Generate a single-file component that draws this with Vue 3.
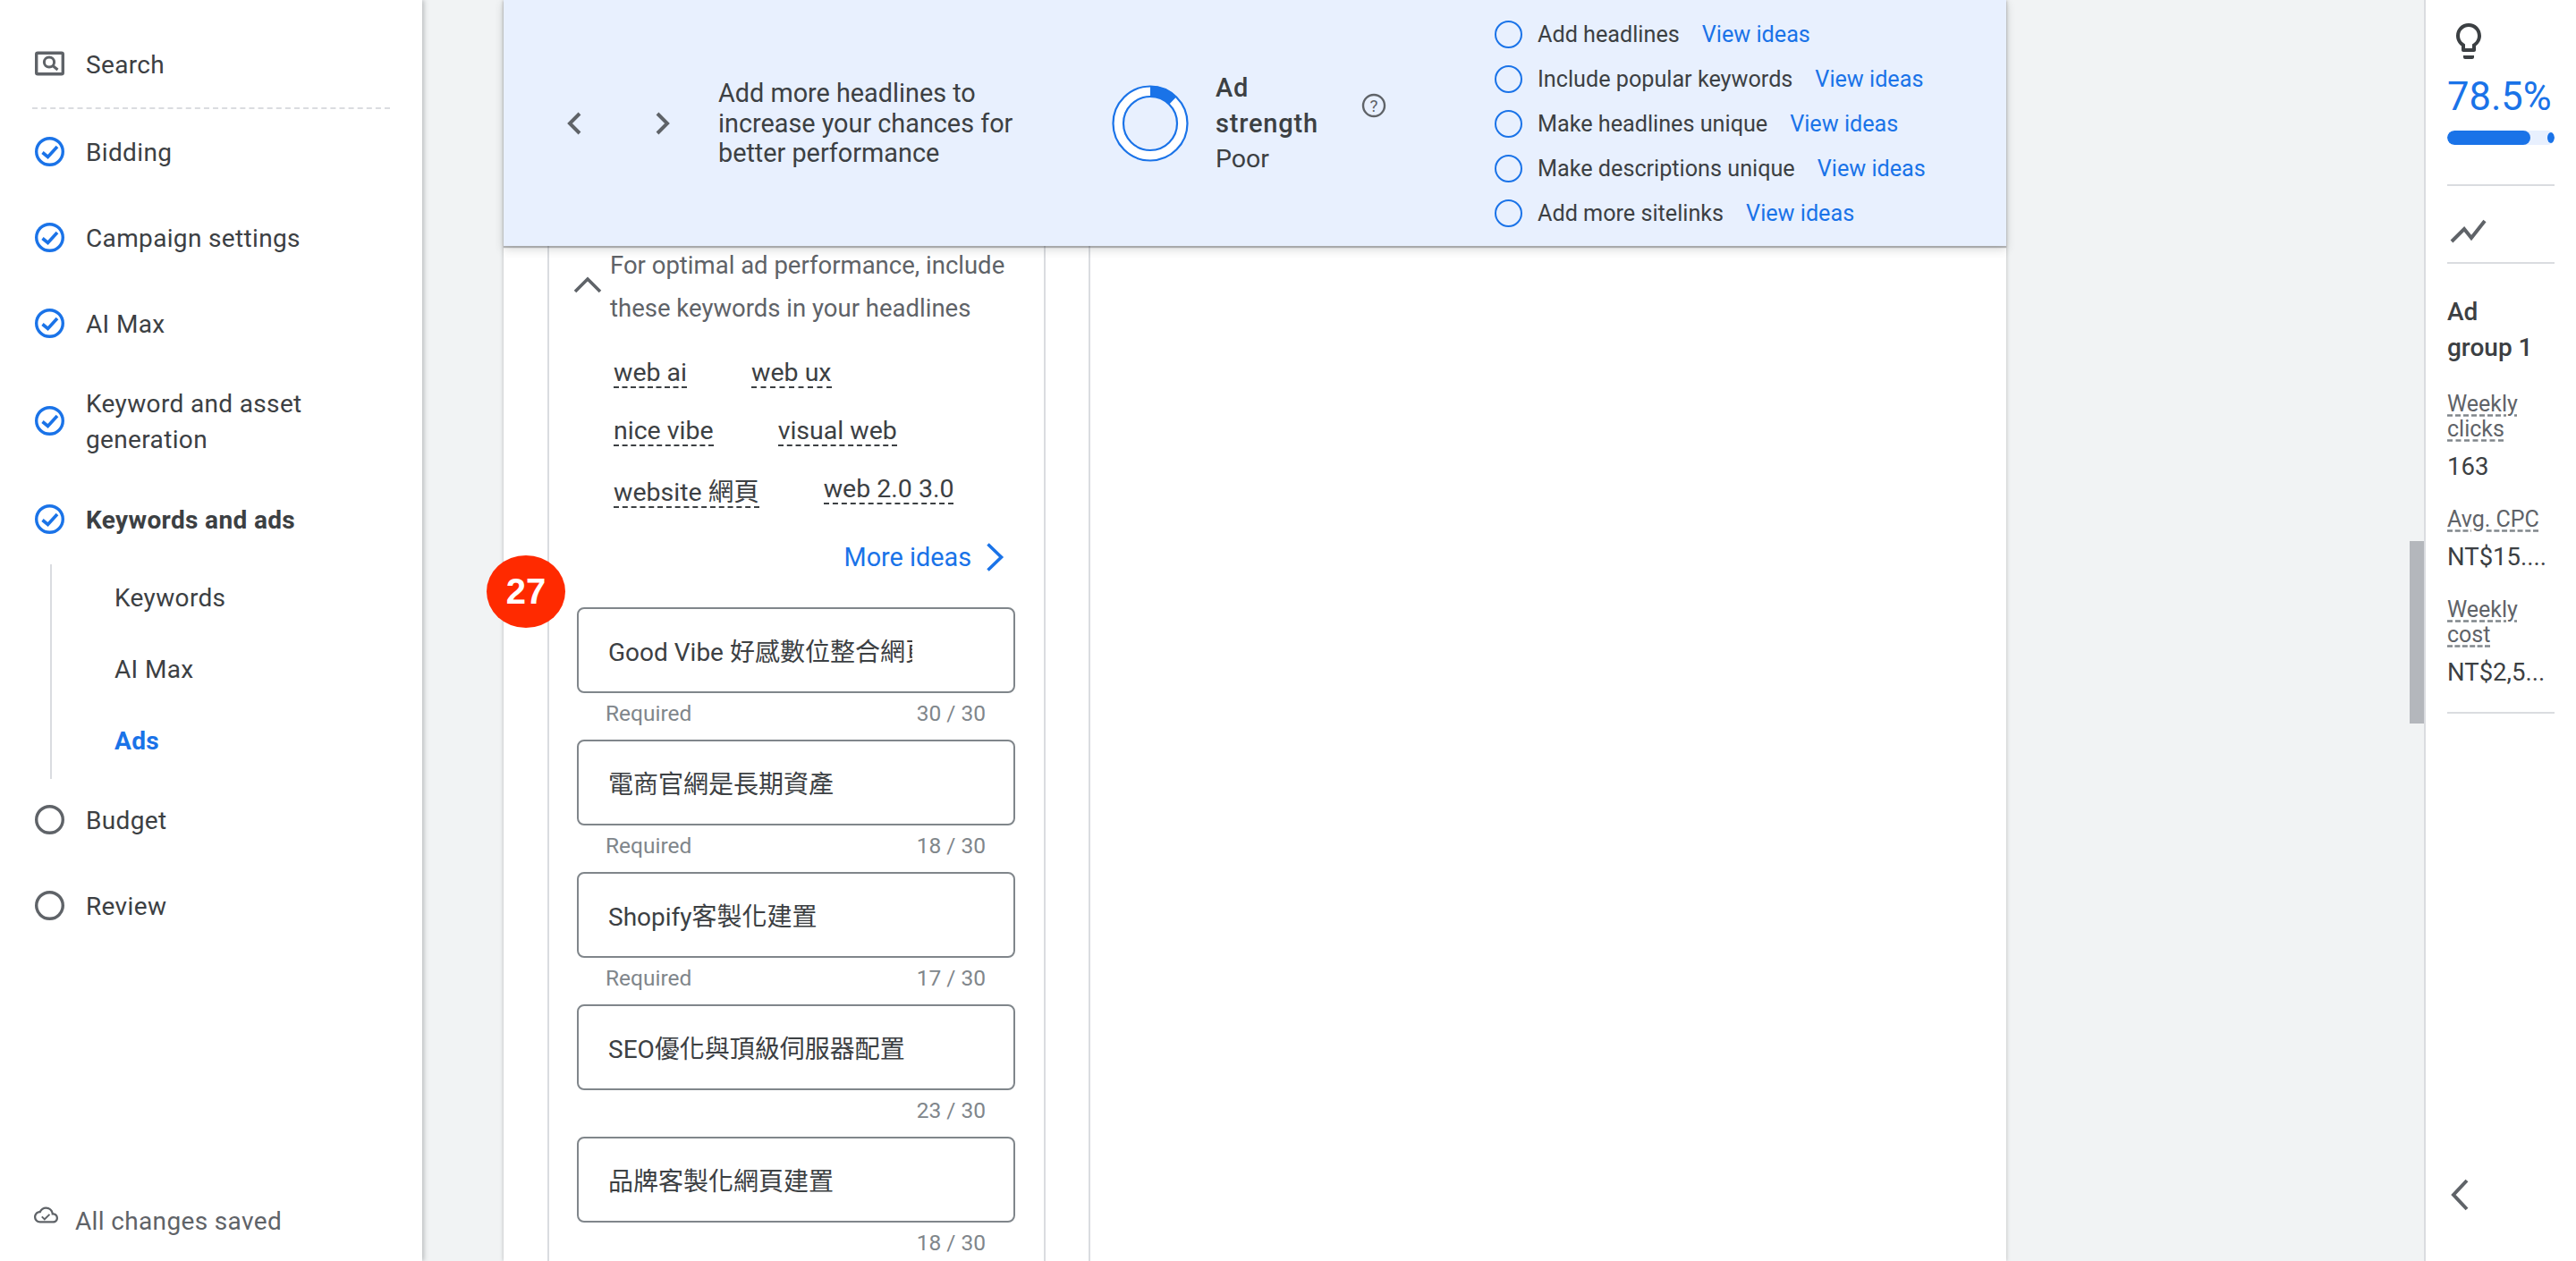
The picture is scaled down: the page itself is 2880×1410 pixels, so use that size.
<script setup>
import { ref } from 'vue';

const steps = ref([
    { label: 'Bidding', done: true },
    { label: 'Campaign settings', done: true },
    { label: 'AI Max', done: true },
    { label: 'Keyword and asset generation', done: true },
    { label: 'Keywords and ads', done: true, current: true, subs: ['Keywords', 'AI Max', 'Ads'] },
    { label: 'Budget', done: false },
    { label: 'Review', done: false },
]);

const tips = ref(['Add headlines', 'Include popular keywords', 'Make headlines unique', 'Make descriptions unique', 'Add more sitelinks']);

const keywords = ref(['web ai', 'web ux', 'nice vibe', 'visual web', 'website 網頁', 'web 2.0 3.0']);

const headlines = ref([
    { text: 'Good Vibe 好感數位整合網頁', count: 30, required: true },
    { text: '電商官網是長期資產', count: 18, required: true },
    { text: 'Shopify客製化建置', count: 17, required: true },
    { text: 'SEO優化與頂級伺服器配置', count: 23, required: false },
    { text: '品牌客製化網頁建置', count: 18, required: false },
]);
</script>

<template>
    <div class="page">
        <aside class="sidebar">
            <div class="search-row">
                <svg class="side-icon" width="33" height="33" viewBox="0 0 33 33">
                    <rect x="1.7" y="4.2" width="29.6" height="23.6" rx="1.5" fill="none" stroke="#5f6368" stroke-width="3.4" />
                    <circle cx="16" cy="14.5" r="5.6" fill="none" stroke="#5f6368" stroke-width="3" />
                    <path d="M20 18.5l5.5 4.5" stroke="#5f6368" stroke-width="3" />
                </svg>
                <span class="step__label">Search</span>
            </div>
            <div v-for="step in steps" :key="step.label">
                <div class="step" :class="{ 'step--current': step.current }">
                    <svg class="side-icon" width="33" height="33" viewBox="0 0 33 33">
                        <circle cx="16.5" cy="16.5" r="14.8" fill="none" :stroke="step.done ? '#1a73e8' : '#5f6368'" stroke-width="3.4" />
                        <path v-if="step.done" d="M8.5 17.5l6 5L25 11" fill="none" stroke="#1a73e8" stroke-width="3.6" />
                    </svg>
                    <span class="step__label">{{ step.label }}</span>
                </div>
                <div v-if="step.subs" class="subs">
                    <div v-for="sub in step.subs" :key="sub" class="sub" :class="{ 'sub--active': sub === 'Ads' }">{{ sub }}</div>
                </div>
            </div>
            <div class="saved">
                <svg width="27" height="27" viewBox="0 0 24 24" fill="#5f6368">
                    <path d="M19.35 10.04C18.67 6.59 15.64 4 12 4 9.11 4 6.6 5.64 5.35 8.04 2.34 8.36 0 10.91 0 14c0 3.31 2.69 6 6 6h13c2.76 0 5-2.24 5-5 0-2.64-2.05-4.78-4.65-4.96zM19 18H6c-2.21 0-4-1.79-4-4s1.79-4 4-4h.71C7.37 7.69 9.48 6 12 6c3.04 0 5.5 2.46 5.5 5.5v.5H19c1.66 0 3 1.34 3 3s-1.34 3-3 3z" />
                    <path d="M10.5 15.2l-2.1-2.1-1.2 1.2 3.3 3.3 5.6-5.6-1.2-1.2z" />
                </svg>
                <span class="saved__text">All changes saved</span>
            </div>
        </aside>

        <main class="main">
            <div class="card">
                <div class="strength">
                    <div class="pager">
                        <svg width="48" height="48" viewBox="0 0 48 48"><path d="M29 13L18 24l11 11" fill="none" stroke="#5f6368" stroke-width="4" /></svg>
                        <svg width="48" height="48" viewBox="0 0 48 48"><path d="M19 13l11 11-11 11" fill="none" stroke="#5f6368" stroke-width="4" /></svg>
                    </div>
                    <p class="strength__msg">Add more headlines to increase your chances for better performance</p>
                    <svg class="donut" width="86" height="86" viewBox="0 0 86 86">
                        <circle cx="43" cy="43" r="41.5" fill="#fff" stroke="#1a73e8" stroke-width="2.2" />
                        <circle cx="43" cy="43" r="36" fill="none" stroke="#1a73e8" stroke-width="12" stroke-dasharray="28 226" transform="rotate(-90 43 43)" />
                        <circle cx="43" cy="43" r="30" fill="#e8f0fe" stroke="#1a73e8" stroke-width="2.2" />
                    </svg>
                    <div class="score">
                        <div class="score__title">Ad<br>strength</div>
                        <div>Poor</div>
                    </div>
                    <svg class="help" width="28" height="28" viewBox="0 0 28 28">
                        <circle cx="14" cy="14" r="12" fill="none" stroke="#5f6368" stroke-width="2.4" />
                        <text x="14" y="20.5" text-anchor="middle" font-size="19" fill="#5f6368" font-family="Roboto, sans-serif">?</text>
                    </svg>
                    <ul class="tips">
                        <li v-for="tip in tips" :key="tip" class="tip">
                            <span class="tip__dot"></span>
                            <span>{{ tip }}</span>
                            <a class="tip__link">View ideas</a>
                        </li>
                    </ul>
                </div>

                <div class="body">
                    <section class="ad-col">
                        <div class="hint">
                            <svg class="hint__caret" width="34" height="20" viewBox="0 0 34 20"><path d="M3 18L17 4l14 14" fill="none" stroke="#5f6368" stroke-width="3.6" /></svg>
                            <p>For optimal ad performance, include these keywords in your headlines</p>
                        </div>
                        <div class="keywords">
                            <span v-for="word in keywords" :key="word" class="keyword" :class="{ 'keyword--cjk': word.includes('網') }">{{ word }}</span>
                        </div>
                        <div class="more">
                            <span>More ideas</span>
                            <svg width="20" height="32" viewBox="0 0 20 32"><path d="M1.5 1.5L16.5 16 1.5 30.5" fill="none" stroke="#1a73e8" stroke-width="3.6" /></svg>
                        </div>
                        <div v-for="item in headlines" :key="item.text" class="field">
                            <div class="field__box"><span class="field__text">{{ item.text }}</span></div>
                            <div class="field__meta">
                                <span>{{ item.required ? 'Required' : '' }}</span>
                                <span>{{ item.count }} / 30</span>
                            </div>
                        </div>
                        <div class="badge">27</div>
                    </section>
                    <section class="preview-col"></section>
                </div>
            </div>
        </main>

        <aside class="rail">
            <div class="scroll-thumb"></div>
            <svg class="rail__bulb" width="48" height="48" viewBox="0 0 24 24" fill="#3c4043">
                <path d="M9 21c0 .5.4 1 1 1h4c.6 0 1-.5 1-1v-1H9v1zm3-19C8.1 2 5 5.1 5 9c0 2.4 1.2 4.5 3 5.7V17c0 .5.4 1 1 1h6c.6 0 1-.5 1-1v-2.3c1.8-1.3 3-3.4 3-5.7 0-3.9-3.1-7-7-7zm2.9 11.1l-.9.6V16h-4v-2.3l-.8-.6C7.8 12.2 7 10.7 7 9c0-2.8 2.2-5 5-5s5 2.2 5 5c0 1.7-.8 3.2-2.1 4.1z" />
            </svg>
            <div class="rail__pct">78.5%</div>
            <div class="rail__bar"><div class="rail__fill"></div><div class="rail__dot"></div></div>
            <div class="rail__rule rail__rule--first"></div>
            <svg class="rail__trend" width="48" height="48" viewBox="0 0 48 48">
                <path d="M5 36l14-14 8 10 15-19" fill="none" stroke="#5f6368" stroke-width="4" />
            </svg>
            <div class="rail__rule"></div>
            <div class="rail__title">Ad group 1</div>
            <div class="metric">
                <div class="metric__label"><span>Weekly</span> <span>clicks</span></div>
                <div class="metric__value">163</div>
            </div>
            <div class="metric">
                <div class="metric__label metric__label--one"><span>Avg. CPC</span></div>
                <div class="metric__value">NT$15....</div>
            </div>
            <div class="metric">
                <div class="metric__label"><span>Weekly</span> <span>cost</span></div>
                <div class="metric__value">NT$2,5...</div>
            </div>
            <div class="rail__rule rail__rule--last"></div>
            <svg class="rail__back" width="22" height="36" viewBox="0 0 22 36"><path d="M19 2L4 18l15 16" fill="none" stroke="#5f6368" stroke-width="4" /></svg>
        </aside>
    </div>
</template>

<style scoped>
    .page{
        display: flex;
        width: 2880px;
        height: 1410px;
        overflow: hidden;
        background-color: #f1f3f4;
        font-family: Roboto, "Noto Sans CJK TC", sans-serif;
        color: #3c4043;
    }
    .sidebar{
        position: relative;
        width: 472px;
        flex-shrink: 0;
        box-sizing: border-box;
        background-color: #fff;
        box-shadow: 2px 0 5px rgba(60, 64, 67, 0.3);
        padding-left: 39px;
        font-size: 28px;
        letter-spacing: 0.35px;
    }
    .search-row{
        display: flex;
        align-items: center;
        gap: 24px;
        height: 122px;
        padding-top: 22px;
        margin-left: -3px;
        padding-left: 3px;
        width: 400px;
        border-bottom: 2px dashed #dadce0;
        box-sizing: border-box;
        margin-bottom: -1px;
    }
    .side-icon{
        flex-shrink: 0;
    }
    .step{
        display: flex;
        align-items: center;
        gap: 24px;
        min-height: 96px;
        padding: 20px 0;
        box-sizing: border-box;
        line-height: 40px;
    }
    .step__label{
        width: 300px;
        padding-top: 3px;
    }
    .step--current .step__label{
        font-weight: 700;
    }
    .subs{
        height: 240px;
        margin: 3px 0 -3px 17px;
        border-left: 2px solid #dadce0;
        padding-left: 70px;
    }
    .sub{
        height: 80px;
        line-height: 76px;
    }
    .sub--active{
        color: #1a73e8;
        font-weight: 700;
    }
    .saved{
        position: absolute;
        left: 38px;
        top: 1345px;
        display: flex;
        align-items: flex-start;
        gap: 19px;
        line-height: 40px;
        color: #5f6368;
    }
    .saved__text{
        margin-top: 1px;
    }
    .main{
        flex: 1;
        padding-left: 91px;
        min-width: 0;
    }
    .card{
        width: 1680px;
        height: 1410px;
        background-color: #fff;
        box-shadow: 0 0 4px rgba(60, 64, 67, 0.35);
    }
    .strength{
        position: relative;
        z-index: 2;
        display: flex;
        align-items: center;
        height: 275px;
        padding-left: 56px;
        box-sizing: border-box;
        background-color: #e8f0fe;
        box-shadow: 0 2px 1px rgba(60, 64, 67, 0.35), 0 4px 10px rgba(60, 64, 67, 0.2);
    }
    .pager{
        display: flex;
        gap: 49px;
        width: 184px;
        flex-shrink: 0;
    }
    .strength__msg{
        width: 340px;
        margin: 2px 100px 0 0;
        font-size: 28.8px;
        line-height: 33.5px;
    }
    .donut{
        flex-shrink: 0;
    }
    .score{
        width: 160px;
        margin-left: 30px;
        font-size: 28.5px;
        line-height: 40px;
    }
    .score__title{
        font-weight: 500;
        font-size: 29px;
        letter-spacing: 0.8px;
    }
    .help{
        margin: -40px 0 0 3px;
        flex-shrink: 0;
    }
    .tips{
        list-style: none;
        margin: 2px 0 0 121px;
        padding: 0;
        font-size: 25.2px;
    }
    .tip{
        display: flex;
        align-items: center;
        height: 50px;
    }
    .tip__dot{
        width: 27px;
        height: 27px;
        border: 2px solid #1a73e8;
        border-radius: 50%;
        margin-right: 17px;
    }
    .tip__link{
        margin-left: 25px;
        color: #1a73e8;
    }
    .body{
        display: flex;
        height: 1135px;
    }
    .ad-col{
        position: relative;
        width: 557px;
        margin-left: 49px;
        border-left: 2px solid #dadce0;
        border-right: 2px solid #dadce0;
        box-sizing: border-box;
        padding: 0 32px 0 31px;
    }
    .preview-col{
        width: 0;
        margin-left: 48px;
        border-left: 2px solid #dadce0;
    }
    .hint{
        position: relative;
        margin-top: -2px;
        padding-left: 37px;
        font-size: 27.5px;
        line-height: 48px;
        color: #5f6368;
    }
    .hint p{
        margin: 0;
        width: 460px;
    }
    .hint__caret{
        position: absolute;
        left: -5px;
        top: 35px;
    }
    .keywords{
        display: flex;
        flex-wrap: wrap;
        align-items: flex-start;
        gap: 33px 72px;
        width: 400px;
        margin: 33px 0 0 41px;
        font-size: 28.5px;
    }
    .keyword{
        line-height: 30px;
        border-bottom: 2px dashed #3c4043;
    }
    .keyword--cjk{
        margin-top: 4px;
    }
    .more{
        display: flex;
        align-items: center;
        justify-content: flex-end;
        gap: 17px;
        height: 40px;
        margin: 35px 12px 36px 0;
        font-size: 28.8px;
        color: #1a73e8;
    }
    .field{
        height: 148px;
    }
    .field__box{
        display: flex;
        align-items: center;
        height: 96px;
        border: 2px solid #80868b;
        border-radius: 8px;
        box-sizing: border-box;
        padding-left: 33px;
        font-size: 28px;
    }
    .field__text{
        width: 340px;
        overflow: hidden;
        white-space: nowrap;
    }
    .field__meta{
        display: flex;
        justify-content: space-between;
        padding: 8px 33px 0 32px;
        font-size: 24.5px;
        color: #80868b;
    }
    .badge{
        position: absolute;
        left: -70px;
        top: 346px;
        width: 88px;
        height: 81px;
        display: flex;
        align-items: center;
        justify-content: center;
        border-radius: 50%;
        background-color: #ff2a00;
        color: #fff;
        font-family: "Liberation Sans", sans-serif;
        font-weight: 700;
        font-size: 40px;
    }
    .rail{
        position: relative;
        width: 170px;
        flex-shrink: 0;
        box-sizing: border-box;
        background-color: #fff;
        border-left: 2px solid #dadce0;
        padding-left: 24px;
        padding-right: 24px;
    }
    .scroll-thumb{
        position: absolute;
        left: -18px;
        top: 605px;
        width: 16px;
        height: 204px;
        background-color: #b4b7bc;
    }
    .rail__bulb{
        display: block;
        margin: 22px 0 0 0;
    }
    .rail__pct{
        margin-top: 9px;
        font-size: 43.5px;
        line-height: 60px;
        color: #1a73e8;
        white-space: nowrap;
    }
    .rail__bar{
        position: relative;
        height: 16px;
        margin-top: 7px;
        border-radius: 8px;
        background-color: #e8f0fe;
        overflow: hidden;
    }
    .rail__fill{
        width: 93px;
        height: 16px;
        border-radius: 8px;
        background-color: #1a73e8;
    }
    .rail__dot{
        position: absolute;
        right: 0;
        top: 2px;
        width: 8px;
        height: 12px;
        border-radius: 50%;
        background-color: #1a73e8;
    }
    .rail__rule{
        height: 2px;
        background-color: #dadce0;
    }
    .rail__rule--first{
        margin-top: 44px;
    }
    .rail__trend{
        display: block;
        margin: 26px 0 11px 0;
    }
    .rail__title{
        margin: 34px 0 4px 0;
        width: 100px;
        font-size: 28px;
        font-weight: 500;
        line-height: 40px;
    }
    .metric{
        margin-top: 29px;
    }
    .metric__label{
        width: 100px;
        font-size: 25px;
        line-height: 28px;
        color: #5f6368;
    }
    .metric__label--one{
        white-space: nowrap;
    }
    .metric__label span{
        text-decoration: underline dashed #80868b;
        text-underline-offset: 3px;
    }
    .metric__value{
        margin-top: 12px;
        font-size: 27.5px;
        line-height: 32px;
        white-space: nowrap;
    }
    .rail__rule--last{
        margin-top: 28px;
    }
    .rail__back{
        position: absolute;
        left: 27px;
        top: 1318px;
    }
</style>

<style>
    html, body{
        margin: 0;
        overflow: hidden;
    }
</style>
